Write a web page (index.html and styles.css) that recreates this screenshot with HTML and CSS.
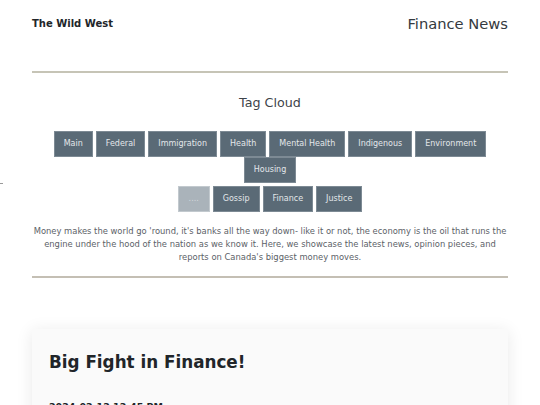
FILE: index.html
```html
<!DOCTYPE html>
<html>
<head>
<meta charset="utf-8">
<link rel="stylesheet" href="styles.css">
</head>
<body>
<span class="stray"></span>
<div class="page">
  <header class="top">
    <div class="brand">The Wild West</div>
    <div class="section">Finance News</div>
  </header>
  <hr class="rule">
  <section class="cloud">
    <h2 class="cloud-title">Tag Cloud</h2>
    <div class="tags">
      <span class="tag">Main</span>
      <span class="tag">Federal</span>
      <span class="tag">Immigration</span>
      <span class="tag">Health</span>
      <span class="tag">Mental Health</span>
      <span class="tag">Indigenous</span>
      <span class="tag">Environment</span>
      <span class="tag">Housing</span>
    </div>
    <div class="tags tags-second">
      <span class="tag tag-more">....</span>
      <span class="tag">Gossip</span>
      <span class="tag">Finance</span>
      <span class="tag">Justice</span>
    </div>
    <p class="intro">Money makes the world go 'round, it's banks all the way down- like it or not, the economy is the oil that runs the engine under the hood of the nation as we know it. Here, we showcase the latest news, opinion pieces, and reports on Canada's biggest money moves.</p>
  </section>
  <hr class="rule rule-bottom">
  <article class="card">
    <h1 class="card-title">Big Fight in Finance!</h1>
    <div class="card-date">2024-02-12 12:45 PM</div>
  </article>
</div>
</body>
</html>
```
FILE: styles.css
```css
html, body {
  margin: 0;
  padding: 0;
  background: #ffffff;
  font-family: "DejaVu Sans", Verdana, sans-serif;
  overflow: hidden;
}
.stray {
  position: absolute;
  left: 0;
  top: 183px;
  width: 3px;
  height: 1px;
  background: #9a9a9a;
}
.page {
  width: 476px;
  margin: 0 auto;
  padding-top: 14px;
}
.top {
  display: flex;
  justify-content: space-between;
  align-items: center;
  height: 18px;
}
.brand {
  font-size: 10px;
  font-weight: bold;
  color: #212529;
}
.section {
  font-size: 14.7px;
  color: #343a40;
}
.rule {
  border: 0;
  height: 2px;
  background: #c6c4b6;
  margin: 39px 0 0 0;
}
.cloud {
  display: flex;
  flex-direction: column;
  align-items: center;
}
.cloud-title {
  font-size: 12.7px;
  font-weight: normal;
  color: #3d4349;
  margin: 21px 0 0 0;
  line-height: 17px;
}
.tags {
  display: flex;
  flex-wrap: wrap;
  justify-content: center;
  column-gap: 3px;
  row-gap: 0;
  margin-top: 20px;
}
.tags-second {
  margin-top: 3px;
}
.tag {
  display: block;
  box-sizing: border-box;
  height: 26px;
  line-height: 24px;
  padding: 0 9px;
  font-size: 8px;
  color: #e3e7ea;
  background: #5a6a76;
  border: 1px solid #7d8a94;
}
.tag-more {
  background: #aab3ba;
  color: #d4d9dd;
  border-color: #c2c9ce;
  padding: 0 10px;
}
.intro {
  margin: 13px 0 0 0;
  font-size: 8.4px;
  line-height: 13px;
  text-align: center;
  color: #5b6167;
}
.rule-bottom {
  margin-top: 12px;
  background: #c4bfb4;
}
.card {
  margin-top: 51px;
  background: #fafafa;
  box-shadow: 0 2px 16px rgba(0, 0, 0, 0.09);
  padding: 22px 17px 20px 17px;
}
.card-title {
  margin: 0;
  font-size: 16.8px;
  line-height: 22px;
  font-weight: bold;
  color: #212529;
}
.card-date {
  margin-top: 28px;
  font-size: 9.5px;
  font-weight: bold;
  color: #212529;
}
```
